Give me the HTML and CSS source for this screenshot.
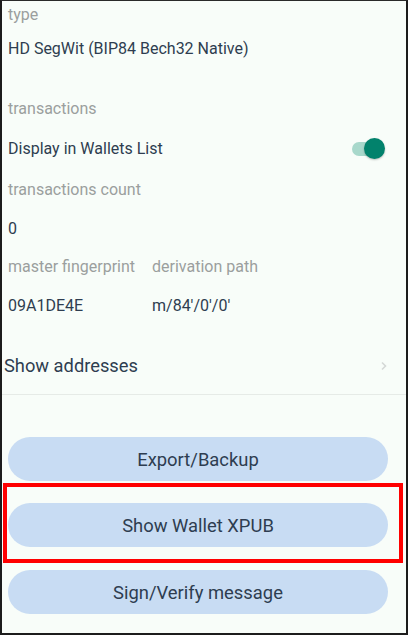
FILE: index.html
```html
<!DOCTYPE html>
<html>
<head>
<meta charset="utf-8">
<link rel="stylesheet" href="styles.css">
</head>
<body>
<div class="screen">
  <div class="details">
    <div class="label first">type</div>
    <div class="value v-first">HD SegWit (BIP84 Bech32 Native)</div>
    <div class="label group">transactions</div>
    <div class="toggle-row">
      <span class="value-text">Display in Wallets List</span>
      <span class="switch"><span class="track"></span><span class="thumb"></span></span>
    </div>
    <div class="label after-toggle">transactions count</div>
    <div class="value">0</div>
    <div class="pair">
      <div class="col col-a">
        <div class="label">master fingerprint</div>
        <div class="value">09A1DE4E</div>
      </div>
      <div class="col">
        <div class="label">derivation path</div>
        <div class="value">m/84'/0'/0'</div>
      </div>
    </div>
  </div>
  <div class="list-item">
    <span class="item-title">Show addresses</span>
    <svg class="chevron" width="8" height="10" viewBox="0 0 8 10"><polyline points="2,1.5 5.5,5 2,8.5" fill="none" stroke="#d4d8d6" stroke-width="1.6"/></svg>
  </div>
  <div class="actions">
    <button class="btn">Export/Backup</button>
    <button class="btn">Show Wallet XPUB</button>
    <button class="btn">Sign/Verify message</button>
  </div>
  <div class="highlight"></div>
</div>
</body>
</html>
```

FILE: styles.css
```css
html, body {
  margin: 0;
  padding: 0;
  background: #222;
}
body {
  width: 408px;
  height: 635px;
  overflow: hidden;
}
.screen {
  position: relative;
  box-sizing: border-box;
  width: 408px;
  height: 635px;
  background: #f8fdf9;
  border-left: 2px solid #1c1c1c;
  border-right: 2px solid #1c1c1c;
  border-bottom: 2px solid #1c1c1c;
  border-top: 1px solid #2a2a2a;
  font-family: Roboto, "Noto Sans", sans-serif;
  color: #2e3d50;
}
.details {
  padding: 4px 6px 0;
}
.label {
  font-size: 16px;
  line-height: 20px;
  color: #9b9f9e;
}
.value, .value-text {
  font-size: 16px;
  line-height: 20px;
  color: #2e3d50;
}
.value {
  margin-top: 19px;
}
.value.v-first {
  margin-top: 14px;
}
.label.group {
  margin-top: 40px;
}
.toggle-row {
  margin-top: 20px;
  height: 20px;
  display: flex;
  align-items: center;
  justify-content: space-between;
}
.label.after-toggle {
  margin-top: 21px;
}
.pair {
  display: flex;
  margin-top: 18px;
}
.col-a {
  width: 144px;
}
.switch {
  position: relative;
  width: 36px;
  height: 22px;
  margin-right: 13px;
}
.track {
  position: absolute;
  left: 1px;
  top: 4px;
  width: 30px;
  height: 14px;
  border-radius: 7px;
  background: #a8d8cb;
}
.thumb {
  position: absolute;
  right: 2px;
  top: 0px;
  width: 21px;
  height: 21px;
  border-radius: 50%;
  background: #02826c;
  box-shadow: 0 1px 2px rgba(0,0,0,0.25);
}
.list-item {
  margin-top: 38px;
  height: 24px;
  padding: 0 18px 0 2px;
  display: flex;
  align-items: center;
  justify-content: space-between;
}
.item-title {
  font-size: 18.3px;
  line-height: 24px;
  color: #2e3d50;
}
.chevron {
  display: block;
}
.actions {
  margin-top: 16px;
  border-top: 1px solid #e6ebe7;
  padding: 42px 18px 0 6px;
  display: flex;
  flex-direction: column;
  gap: 22px;
}
.btn {
  height: 44px;
  border: none;
  border-radius: 22px;
  background: #c8dcf3;
  color: #2e3d50;
  font-family: Roboto, "Noto Sans", sans-serif;
  font-size: 18.4px;
  padding: 0;
  cursor: pointer;
}
.actions .btn:nth-child(3) {
  margin-top: 1px;
}
.highlight {
  position: absolute;
  left: 1px;
  top: 482px;
  width: 392px;
  height: 72px;
  border: 4px solid #ff0000;
  pointer-events: none;
}
```
